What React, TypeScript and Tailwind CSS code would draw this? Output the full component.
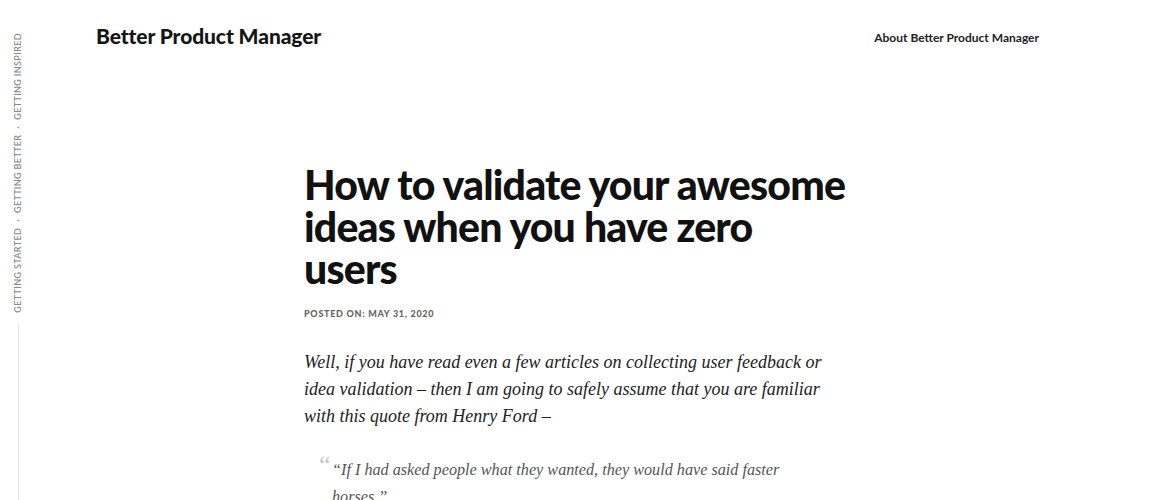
import React from 'react';

const sans = "font-['Lato','Liberation_Sans',sans-serif]";
const serif = "font-['Liberation_Serif','DejaVu_Serif',serif]";

const SideNav: React.FC = () => (
  <aside className="flex w-9 shrink-0 flex-col items-center pt-[33px]">
    <nav
      className={`${sans} rotate-180 text-[9px] font-semibold uppercase tracking-[0.04em] text-[#8a8a8a] [writing-mode:vertical-rl]`}
    >
      <span>Getting Started</span>
      <span className="px-[6px]">·</span>
      <span>Getting Better</span>
      <span className="px-[6px]">·</span>
      <span>Getting Inspired</span>
    </nav>
    <div className="mt-[10px] w-px flex-1 bg-[#e6e6e6]" />
  </aside>
);

export default function App() {
  return (
    <div className="flex h-[500px] w-full overflow-hidden bg-white text-[#111]">
      <SideNav />

      <div className="flex min-w-0 flex-1 flex-col">
        {/* header */}
        <header className="flex items-center justify-between pl-[60px] pr-[112px] pt-[22px]">
          <a className={`${sans} text-[21px] font-black leading-[28px] tracking-[-0.005em] text-[#151515]`}>
            Better Product Manager
          </a>
          <a className={`${sans} pt-[3px] text-[12px] font-bold text-[#222]`}>About Better Product Manager</a>
        </header>

        {/* article */}
        <article className="ml-[268px] mt-[114px] w-[550px]">
          <h1 className={`${sans} w-[545px] text-[41px] font-black leading-[42px] tracking-[-0.02em] text-[#111]`}>
            How to validate your awesome ideas when you have zero users
          </h1>

          <div className={`${sans} mt-[17px] text-[9px] font-black uppercase tracking-[0.08em] text-[#666]`}>
            Posted on: May 31, 2020
          </div>

          <p className={`${serif} mt-[28px] w-[532px] text-[18px] italic leading-[27px] text-[#222]`}>
            Well, if you have read even a few articles on collecting user feedback or idea validation – then I am
            going to safely assume that you are familiar with this quote from Henry Ford –
          </p>

          <blockquote className="relative mt-[27px] pl-[28px] pr-[40px]">
            <span className={`${serif} absolute left-[15px] top-[-5px] text-[26px] leading-none text-[#c8c8c8]`}>
              “
            </span>
            <p className={`${serif} text-[16.2px] italic leading-[27px] text-[#555]`}>
              “If I had asked people what they wanted, they would have said faster horses.”
            </p>
          </blockquote>
        </article>
      </div>
    </div>
  );
}
